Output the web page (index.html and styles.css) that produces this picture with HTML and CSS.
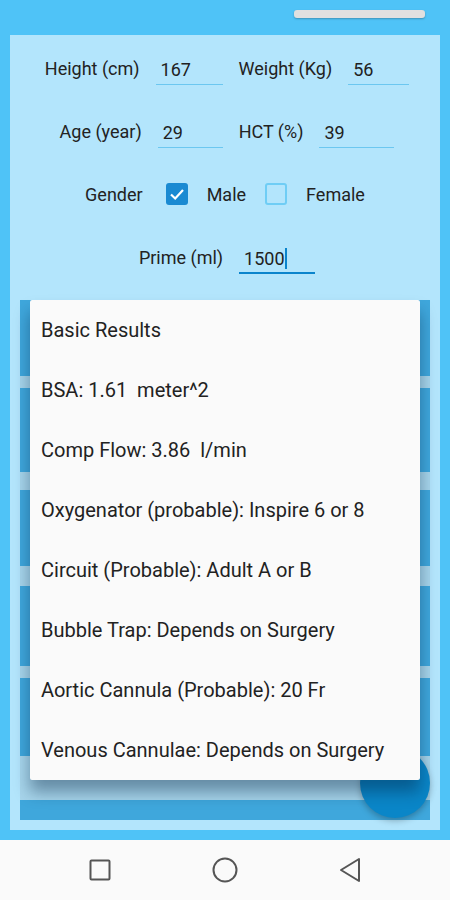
FILE: index.html
```html
<!DOCTYPE html>
<html>
<head>
<meta charset="utf-8">
<link rel="stylesheet" href="styles.css">
</head>
<body>
<div class="screen">
  <div class="topbar"><div class="pill"></div></div>
  <div class="panel">
    <div class="form">
      <div class="row">
        <span class="label">Height (cm)</span>
        <span class="input w67">167</span>
        <span class="label">Weight (Kg)</span>
        <span class="input w61">56</span>
      </div>
      <div class="row">
        <span class="label">Age (year)</span>
        <span class="input w65">29</span>
        <span class="label">HCT (%)</span>
        <span class="input w75">39</span>
      </div>
      <div class="row gender">
        <span class="label">Gender</span>
        <span class="check checked"><svg viewBox="0 0 22 22" width="22" height="22"><path d="M5 11.5 L9.2 15.5 L17 7" fill="none" stroke="#fff" stroke-width="2.2"/></svg></span>
        <span class="label">Male</span>
        <span class="check"></span>
        <span class="label">Female</span>
      </div>
      <div class="row">
        <span class="label">Prime (ml)</span>
        <span class="input focused w76">1500<span class="cursor"></span></span>
      </div>
    </div>
    <div class="cards">
      <div class="bar b1"></div>
      <div class="bar b2"></div>
      <div class="bar b3"></div>
      <div class="bar b4"></div>
      <div class="bar b5"></div>
      <div class="bar b6"></div>
      <div class="fab"></div>
      <div class="dialog">
        <div class="item">Basic Results</div>
        <div class="item">BSA: 1.61&nbsp; meter^2</div>
        <div class="item">Comp Flow: 3.86&nbsp; l/min</div>
        <div class="item">Oxygenator (probable): Inspire 6 or 8</div>
        <div class="item">Circuit (Probable): Adult A or B</div>
        <div class="item">Bubble Trap: Depends on Surgery</div>
        <div class="item">Aortic Cannula (Probable): 20 Fr</div>
        <div class="item">Venous Cannulae: Depends on Surgery</div>
      </div>
    </div>
  </div>
  <div class="navbar">
    <svg class="nav-icon" viewBox="0 0 24 24" width="24" height="24"><rect x="2.5" y="2.5" width="19" height="19" rx="1" fill="none" stroke="#555" stroke-width="2"/></svg>
    <svg class="nav-icon" viewBox="0 0 26 26" width="26" height="26"><circle cx="13" cy="13" r="11.5" fill="none" stroke="#555" stroke-width="2"/></svg>
    <svg class="nav-icon" viewBox="0 0 24 26" width="24" height="26"><path d="M21 2 L21 24 L3 13 Z" fill="none" stroke="#555" stroke-width="2" stroke-linejoin="round"/></svg>
  </div>
</div>
</body>
</html>
```

FILE: styles.css
```css
* { box-sizing: border-box; }
html, body { margin: 0; padding: 0; }
body {
  width: 450px;
  height: 900px;
  background: #4fc3f7;
  font-family: Roboto, "Noto Sans", sans-serif;
  color: #212121;
  overflow: hidden;
}
.screen {
  display: flex;
  flex-direction: column;
  height: 900px;
}
.topbar {
  height: 35px;
  display: flex;
  justify-content: flex-end;
  padding: 10px 25px 0 0;
}
.pill {
  width: 131px;
  height: 8px;
  border-radius: 3px;
  background: #e0e0e0;
  box-shadow: 0 1px 2px rgba(0,0,0,0.25);
}
.panel {
  margin: 0 10px;
  height: 795px;
  background: #b3e5fc;
  display: flex;
  flex-direction: column;
  padding: 19px 10px 10px;
}
.form {
  display: flex;
  flex-direction: column;
  gap: 35px;
}
.row {
  height: 28px;
  display: flex;
  align-items: center;
  justify-content: center;
  gap: 16px;
  font-size: 18px;
  padding-left: 4px;
}
.label { color: #222; white-space: nowrap; }
.input {
  height: 28px;
  display: flex;
  align-items: center;
  padding: 0 0 0 5px;
  border-bottom: 1px solid #6cc7f0;
  margin-top: 6px;
  padding-bottom: 2px;
}
.input.focused { border-bottom: 2px solid #0a84cc; }
.cursor {
  display: inline-block;
  width: 2px;
  height: 21px;
  background: #0a84cc;
  margin-left: 0;
}
.w67 { width: 67px; }
.w61 { width: 61px; }
.w65 { width: 65px; }
.w75 { width: 75px; }
.w76 { width: 76px; }
.gender { gap: 19px; padding-left: 0; }
.gender .label:first-child { margin-right: 4px; }
.check {
  width: 22px;
  height: 22px;
  border: 2px solid #6fcdf5;
  border-radius: 3px;
  display: flex;
}
.check.checked {
  background: #1a8ad2;
  border-color: #1a8ad2;
  border-width: 0;
}
.cards {
  position: relative;
  margin-top: 29px;
  height: 520px;
  background: #a7d5eb;
  display: flex;
  flex-direction: column;
}
.bar { background: #3fa7dc; }
.b1 { height: 76px; }
.b2 { height: 84px; margin-top: 12px; }
.b3 { height: 76px; margin-top: 18px; }
.b4 { height: 80px; margin-top: 20px; }
.b5 { height: 78px; margin-top: 12px; }
.b6 { height: 20px; margin-top: 44px; }
.fab {
  position: absolute;
  left: 340px;
  top: 448px;
  width: 70px;
  height: 70px;
  border-radius: 50%;
  background: #0a86c8;
  box-shadow: 0 3px 6px rgba(0,0,0,0.25);
}
.dialog {
  position: absolute;
  left: 10px;
  top: 0;
  width: 390px;
  background: #fafafa;
  box-shadow: 0 12px 16px rgba(0,30,60,0.4);
  border-radius: 2px;
}
.item {
  height: 60px;
  display: flex;
  align-items: center;
  padding-left: 11px;
  font-size: 20px;
  color: #222;
  white-space: nowrap;
}
.navbar {
  margin-top: 10px;
  height: 60px;
  background: #fafafa;
  display: flex;
  align-items: center;
  justify-content: center;
  gap: 100px;
}
.nav-icon { display: block; }
```
